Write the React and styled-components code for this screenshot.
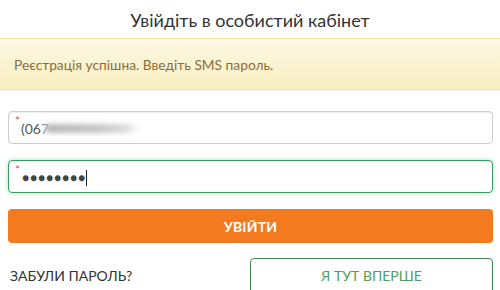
import React from 'react'
import styled, { createGlobalStyle } from 'styled-components'

const Global = createGlobalStyle`
  html, body {
    margin: 0;
    padding: 0;
    background: #fff;
  }
  body {
    font-family: Lato, "Open Sans", "Liberation Sans", sans-serif;
    color: #333;
  }
`;

const Page = styled.div`
  width: 500px;
  height: 290px;
  overflow: hidden;
  background: #fff;
`;

const Title = styled.h1`
  margin: 0;
  height: 38px;
  line-height: 40px;
  text-align: center;
  font-size: 18px;
  font-weight: 400;
  color: #333;
`;

const Alert = styled.div`
  height: 52px;
  box-sizing: border-box;
  display: flex;
  align-items: center;
  padding: 0 14px;
  margin-bottom: 21px;
  font-size: 13.75px;
  color: #8a6d3b;
  background: linear-gradient(to bottom, #fcf8e3 0%, #f8efc0 100%);
  border-top: 1px solid #f5e79e;
  border-bottom: 1px solid #f5e79e;
  box-shadow: inset 0 1px 0 rgba(255, 255, 255, 0.25), 0 1px 2px rgba(0, 0, 0, 0.05);
`;

const Form = styled.div`
  padding: 0 7px 0 8px;
  display: flex;
  flex-direction: column;
  gap: 16px;
`;

const Field = styled.div`
  position: relative;
  height: ${p => p.$h}px;
  box-sizing: border-box;
  border: 1px solid ${p => (p.$ok ? '#3c9a5f' : '#ccc')};
  border-radius: 4px;
  display: flex;
  align-items: center;
  padding: 2px 12px 0;
  font-size: 14px;
  color: #555;
  box-shadow: ${p =>
    p.$ok
      ? 'inset 0 1px 1px rgba(0,0,0,.075), 0 0 5px rgba(103, 200, 140, 0.55)'
      : 'inset 0 1px 1px rgba(0,0,0,.075)'};
`;

const Required = styled.span`
  position: absolute;
  left: 6px;
  top: 3px;
  font-size: 12px;
  line-height: 12px;
  color: #d9535f;
`;

const Smudge = styled.span`
  display: inline-block;
  width: 95px;
  height: 9px;
  margin-left: -4px;
  border-radius: 5px;
  background: linear-gradient(to right, #b8b8b8 0%, #c4c4c4 55%, #dcdcdc 85%, rgba(230, 230, 230, 0) 100%);
  filter: blur(2.5px);
`;

const Dots = styled.span`
  font-size: 12px;
  letter-spacing: 0.8px;
  color: #444;
  margin-left: 1px;
`;

const Caret = styled.span`
  display: inline-block;
  width: 1px;
  height: 16px;
  background: #222;
  margin-left: 0;
`;

const Button = styled.button`
  height: 34px;
  border: none;
  border-radius: 4px;
  background: #f47a1f;
  color: #fff;
  font-family: inherit;
  font-size: 14px;
  font-weight: 700;
  letter-spacing: 0.2px;
  cursor: pointer;
`;

const BottomRow = styled.div`
  display: grid;
  grid-template-columns: 242px 1fr;
  margin-top: -1px;
`;

const Forgot = styled.a`
  padding: 9px 0 0 2px;
  font-size: 14px;
  color: #333;
  text-decoration: none;
`;

const Outline = styled.button`
  height: 36px;
  border: 1px solid #3c8a55;
  border-radius: 4px;
  background: #fff;
  color: #4f9e63;
  font-family: inherit;
  font-size: 14px;
  cursor: pointer;
  padding-top: 0;
`;

export default function App() {
  return (
    <Page>
      <Global />
      <Title>Увійдіть в особистий кабінет</Title>
      <Alert>Реєстрація успішна. Введіть SMS пароль.</Alert>
      <Form>
        <Field $h={33}>
          <Required>*</Required>
          (06<span style={{ opacity: 0.6 }}>7</span>
          <Smudge />
        </Field>
        <Field $h={33} $ok>
          <Required>*</Required>
          <Dots>●●●●●●●●</Dots>
          <Caret />
        </Field>
        <Button>УВІЙТИ</Button>
        <BottomRow>
          <Forgot href="#">ЗАБУЛИ ПАРОЛЬ?</Forgot>
          <Outline>Я ТУТ ВПЕРШЕ</Outline>
        </BottomRow>
      </Form>
    </Page>
  )
}
